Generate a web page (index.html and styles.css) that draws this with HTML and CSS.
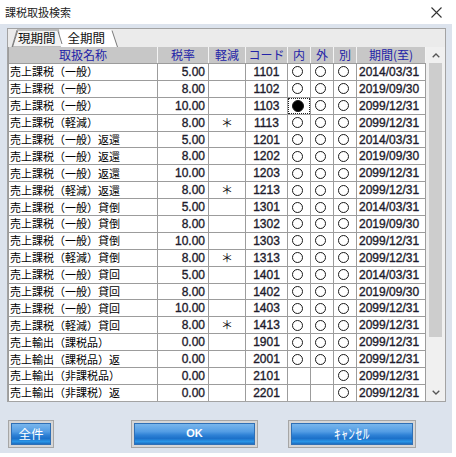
FILE: index.html
```html
<!DOCTYPE html>
<html lang="ja">
<head>
<meta charset="utf-8">
<title>課税取扱検索</title>
<link rel="stylesheet" href="styles.css">
</head>
<body>
<div class="titlebar">
  <span class="title">課税取扱検索</span>
  <svg class="close" width="11" height="11" viewBox="0 0 11 11"><path d="M0.5 0.5 L10.5 10.5 M10.5 0.5 L0.5 10.5" stroke="#333" stroke-width="1.1" fill="none"/></svg>
</div>
<div class="client">
  <div class="panel">
    <div class="tabstrip">
      <svg class="tabshapes" width="437" height="18" viewBox="0 0 437 18">
        <polygon points="4,18 9,1 51,1 56,18" fill="#f3f3f3" stroke="#8a8a8a" stroke-width="1"/>
        <polygon points="51,1 104,1 109,18 53,18" fill="#ffffff"/>
        <path d="M4.5 18 L9.5 2 M50 2 L54 15 M104 1.5 L109.5 18" stroke="#7a7a7a" stroke-width="1" fill="none"/>
      </svg>
      <span class="tab tab-cur">現期間</span>
      <span class="tab tab-all">全期間</span>
    </div>
    <div class="listarea">
      <div class="grid">
        <div class="h">取扱名称</div><div class="h">税率</div><div class="h">軽減</div><div class="h">コード</div><div class="h">内</div><div class="h">外</div><div class="h">別</div><div class="h">期間(至)</div>

        <div class="c nm">売上課税（一般）</div><div class="c num">5.00</div><div class="c ast"></div><div class="c code">1101</div><div class="c rd"><i class="o"></i></div><div class="c rd"><i class="o"></i></div><div class="c rd"><i class="o"></i></div><div class="c dt">2014/03/31</div>
        <div class="c nm">売上課税（一般）</div><div class="c num">8.00</div><div class="c ast"></div><div class="c code">1102</div><div class="c rd"><i class="o"></i></div><div class="c rd"><i class="o"></i></div><div class="c rd"><i class="o"></i></div><div class="c dt">2019/09/30</div>
        <div class="c nm">売上課税（一般）</div><div class="c num">10.00</div><div class="c ast"></div><div class="c code">1103</div><div class="c rd focus"><i class="o f"></i></div><div class="c rd"><i class="o"></i></div><div class="c rd"><i class="o"></i></div><div class="c dt">2099/12/31</div>
        <div class="c nm">売上課税（軽減）</div><div class="c num">8.00</div><div class="c ast">＊</div><div class="c code">1113</div><div class="c rd"><i class="o"></i></div><div class="c rd"><i class="o"></i></div><div class="c rd"><i class="o"></i></div><div class="c dt">2099/12/31</div>

        <div class="c nm">売上課税（一般）返還</div><div class="c num">5.00</div><div class="c ast"></div><div class="c code">1201</div><div class="c rd"><i class="o"></i></div><div class="c rd"><i class="o"></i></div><div class="c rd"><i class="o"></i></div><div class="c dt">2014/03/31</div>
        <div class="c nm">売上課税（一般）返還</div><div class="c num">8.00</div><div class="c ast"></div><div class="c code">1202</div><div class="c rd"><i class="o"></i></div><div class="c rd"><i class="o"></i></div><div class="c rd"><i class="o"></i></div><div class="c dt">2019/09/30</div>
        <div class="c nm">売上課税（一般）返還</div><div class="c num">10.00</div><div class="c ast"></div><div class="c code">1203</div><div class="c rd"><i class="o"></i></div><div class="c rd"><i class="o"></i></div><div class="c rd"><i class="o"></i></div><div class="c dt">2099/12/31</div>
        <div class="c nm">売上課税（軽減）返還</div><div class="c num">8.00</div><div class="c ast">＊</div><div class="c code">1213</div><div class="c rd"><i class="o"></i></div><div class="c rd"><i class="o"></i></div><div class="c rd"><i class="o"></i></div><div class="c dt">2099/12/31</div>

        <div class="c nm">売上課税（一般）貸倒</div><div class="c num">5.00</div><div class="c ast"></div><div class="c code">1301</div><div class="c rd"><i class="o"></i></div><div class="c rd"><i class="o"></i></div><div class="c rd"><i class="o"></i></div><div class="c dt">2014/03/31</div>
        <div class="c nm">売上課税（一般）貸倒</div><div class="c num">8.00</div><div class="c ast"></div><div class="c code">1302</div><div class="c rd"><i class="o"></i></div><div class="c rd"><i class="o"></i></div><div class="c rd"><i class="o"></i></div><div class="c dt">2019/09/30</div>
        <div class="c nm">売上課税（一般）貸倒</div><div class="c num">10.00</div><div class="c ast"></div><div class="c code">1303</div><div class="c rd"><i class="o"></i></div><div class="c rd"><i class="o"></i></div><div class="c rd"><i class="o"></i></div><div class="c dt">2099/12/31</div>
        <div class="c nm">売上課税（軽減）貸倒</div><div class="c num">8.00</div><div class="c ast">＊</div><div class="c code">1313</div><div class="c rd"><i class="o"></i></div><div class="c rd"><i class="o"></i></div><div class="c rd"><i class="o"></i></div><div class="c dt">2099/12/31</div>

        <div class="c nm">売上課税（一般）貸回</div><div class="c num">5.00</div><div class="c ast"></div><div class="c code">1401</div><div class="c rd"><i class="o"></i></div><div class="c rd"><i class="o"></i></div><div class="c rd"><i class="o"></i></div><div class="c dt">2014/03/31</div>
        <div class="c nm">売上課税（一般）貸回</div><div class="c num">8.00</div><div class="c ast"></div><div class="c code">1402</div><div class="c rd"><i class="o"></i></div><div class="c rd"><i class="o"></i></div><div class="c rd"><i class="o"></i></div><div class="c dt">2019/09/30</div>
        <div class="c nm">売上課税（一般）貸回</div><div class="c num">10.00</div><div class="c ast"></div><div class="c code">1403</div><div class="c rd"><i class="o"></i></div><div class="c rd"><i class="o"></i></div><div class="c rd"><i class="o"></i></div><div class="c dt">2099/12/31</div>
        <div class="c nm">売上課税（軽減）貸回</div><div class="c num">8.00</div><div class="c ast">＊</div><div class="c code">1413</div><div class="c rd"><i class="o"></i></div><div class="c rd"><i class="o"></i></div><div class="c rd"><i class="o"></i></div><div class="c dt">2099/12/31</div>

        <div class="c nm">売上輸出（課税品）</div><div class="c num">0.00</div><div class="c ast"></div><div class="c code">1901</div><div class="c rd"><i class="o"></i></div><div class="c rd"><i class="o"></i></div><div class="c rd"><i class="o"></i></div><div class="c dt">2099/12/31</div>
        <div class="c nm">売上輸出（課税品）返</div><div class="c num">0.00</div><div class="c ast"></div><div class="c code">2001</div><div class="c rd"><i class="o"></i></div><div class="c rd"><i class="o"></i></div><div class="c rd"><i class="o"></i></div><div class="c dt">2099/12/31</div>
        <div class="c nm">売上輸出（非課税品）</div><div class="c num">0.00</div><div class="c ast"></div><div class="c code">2101</div><div class="c rd"></div><div class="c rd"></div><div class="c rd"><i class="o"></i></div><div class="c dt">2099/12/31</div>
        <div class="c nm">売上輸出（非課税）返</div><div class="c num">0.00</div><div class="c ast"></div><div class="c code">2201</div><div class="c rd"></div><div class="c rd"></div><div class="c rd"><i class="o"></i></div><div class="c dt">2099/12/31</div>
      </div>
      <div class="vscroll">
        <div class="sbtn"><svg width="8" height="5" viewBox="0 0 8 5"><polyline points="0.7,4.3 4,1 7.3,4.3" fill="none" stroke="#555" stroke-width="1.3"/></svg></div>
        <div class="track"><div class="thumb"></div></div>
        <div class="sbtn"><svg width="8" height="5" viewBox="0 0 8 5"><polyline points="0.7,0.7 4,4 7.3,0.7" fill="none" stroke="#555" stroke-width="1.3"/></svg></div>
      </div>
    </div>
  </div>
  <div class="buttons">
    <button class="btn btn-all"><span class="face">全件</span></button>
    <button class="btn btn-ok"><span class="face ok">OK</span></button>
    <button class="btn btn-cancel"><span class="face cancel">ｷｬﾝｾﾙ</span></button>
  </div>
</div>
</body>
</html>
```

FILE: styles.css
```css
html, body {
  margin: 0;
  padding: 0;
  background: #ffffff;
}
body {
  width: 456px;
  height: 457px;
  overflow: hidden;
  font-family: "Noto Sans CJK JP", "Liberation Sans", sans-serif;
}

.titlebar {
  height: 24px;
  display: flex;
  align-items: center;
  justify-content: space-between;
  padding: 0 14px 0 5px;
  box-sizing: border-box;
}
.title {
  font-size: 11px;
  color: #222;
  line-height: 1;
}
.close {
  display: block;
}

.client {
  width: 452px;
  height: 429px;
  background: #dce3ed;
  box-sizing: border-box;
  padding: 4px 0 0 7px;
}

.panel {
  width: 439px;
  box-sizing: border-box;
  border: 1px solid #a3a3a3;
  background: #ebebeb;
}

.tabstrip {
  height: 18px;
  position: relative;
  display: flex;
  align-items: center;
  background: #ebebeb;
}
.tabshapes {
  position: absolute;
  left: 0;
  top: 0;
}
.tab {
  position: relative;
  font-size: 12.5px;
  line-height: 1;
  color: #111;
  white-space: nowrap;
}
.tab-cur {
  margin-left: 10px;
}
.tab-all {
  margin-left: 12px;
}

.listarea {
  display: flex;
}

.grid {
  display: grid;
  grid-template-columns: 148px 50px 36px 41px 22px 22px 22px 68px;
  grid-template-rows: 16px;
  grid-auto-rows: 15.9px;
  gap: 1px;
  padding: 0 1px;
  background: #9c9c9c;
}

.h {
  background: #c7c7c7;
  color: #2323a8;
  font-size: 12px;
  line-height: 1;
  display: flex;
  align-items: center;
  justify-content: center;
  box-shadow: 1px 0 0 #f4f4f4;
  white-space: nowrap;
}

.c {
  background: #ffffff;
  display: flex;
  align-items: center;
  overflow: hidden;
  white-space: nowrap;
  line-height: 1;
}
.nm {
  font-size: 11px;
  color: #000;
  padding-left: 1px;
}
.num, .code, .dt {
  font-family: "Liberation Sans", sans-serif;
  font-weight: normal;
  font-size: 12px;
  color: #1d1b2c;
  -webkit-text-stroke: 0.35px #1d1b2c;
}
.num {
  justify-content: flex-end;
  padding-right: 3px;
}
.code {
  justify-content: center;
}
.dt {
  padding-left: 2px;
}
.ast {
  justify-content: center;
  font-size: 12px;
  line-height: 12px;
  color: #111;
  overflow: visible;
}
.rd {
  justify-content: center;
  padding-right: 3px;
}
.focus {
  outline: 1px dotted #222;
  outline-offset: -1px;
}
.o {
  display: block;
  width: 11px;
  height: 11px;
  box-sizing: border-box;
  border: 1px solid #1a1a1a;
  border-radius: 50%;
}
.o.f {
  background: #000;
  width: 12px;
  height: 12px;
}

.vscroll {
  width: 19px;
  background: #f0f0f0;
  display: flex;
  flex-direction: column;
}
.sbtn {
  height: 16px;
  display: flex;
  align-items: center;
  justify-content: center;
}
.sbtn svg {
  display: block;
}
.track {
  flex: 1;
  padding: 0 3px;
}
.thumb {
  height: 274px;
  background: #cdcdcd;
}

.buttons {
  display: flex;
  margin-top: 18px;
  margin-left: 1px;
}
.btn {
  height: 28px;
  margin: 0;
  padding: 2px;
  border: 1px solid #a6a6a6;
  background: #d6d6d6;
  box-sizing: border-box;
  display: flex;
  font-family: "Noto Sans CJK JP", "Liberation Sans", sans-serif;
}
.btn-all {
  width: 46px;
}
.btn-ok {
  width: 127px;
  margin-left: 77px;
}
.btn-cancel {
  width: 128px;
  margin-left: 30px;
}
.face {
  flex: 1;
  display: flex;
  align-items: center;
  justify-content: center;
  color: #fff;
  font-size: 12.5px;
  line-height: 1;
  border: 1px solid #2f6fb5;
  background: linear-gradient(to bottom, #79b6ec 0%, #539de4 38%, #2f82d6 55%, #1c70c9 72%, #2a95e6 88%, #1b6cbf 100%);
}
.ok {
  font-family: "Liberation Sans", sans-serif;
  font-weight: bold;
  font-size: 11px;
}
.cancel {
  font-size: 13.5px;
  letter-spacing: 0.5px;
}
```
